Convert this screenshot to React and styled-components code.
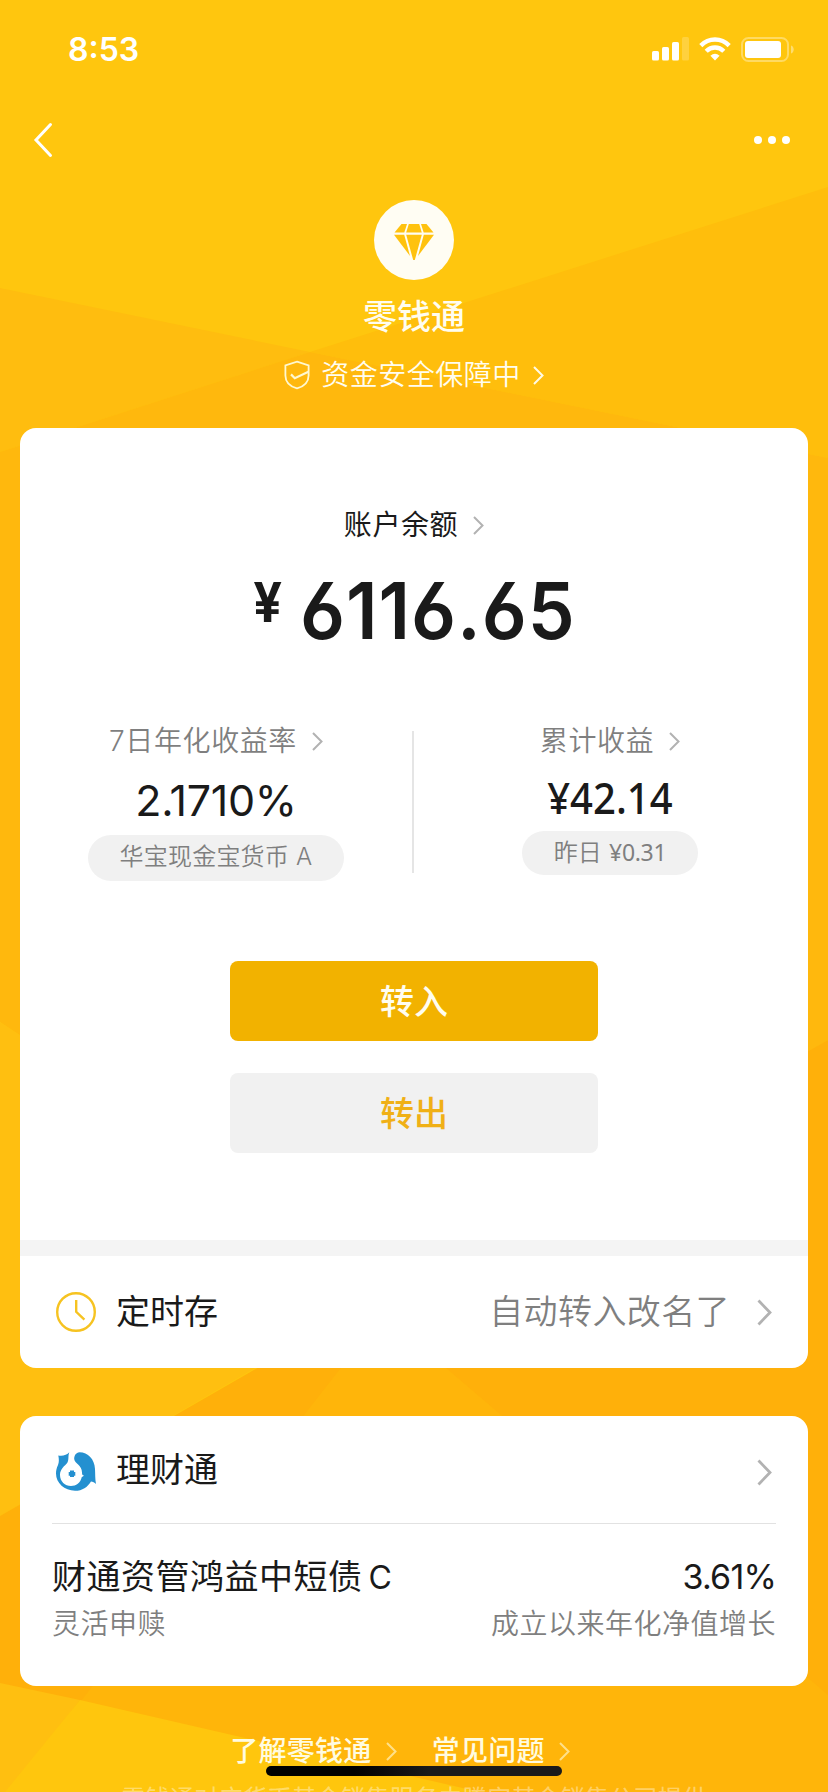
import React from 'react';
import styled, { createGlobalStyle } from 'styled-components';

const GlobalStyle = createGlobalStyle`
  * {
    box-sizing: border-box;
  }
  body {
    margin: 0;
    font-family: Inter, "Noto Sans CJK SC", sans-serif;
    color: #1a1a1a;
  }
`;

//page, the backdrop and the content share one grid cell
const Page = styled.div`
  display: grid;
  width: 828px;
  height: 1792px;
  overflow: hidden;
  position: relative;
  background-color: #ffc60e;
`;

const Backdrop = styled.svg`
  grid-area: 1 / 1;
`;

const Content = styled.div`
  grid-area: 1 / 1;
  display: flex;
  flex-direction: column;
  height: 1792px;
  padding: 0 20px;
  z-index: 1;
`;

//top bars
const StatusBar = styled.div`
  display: flex;
  flex-shrink: 0;
  align-items: center;
  justify-content: space-between;
  height: 98px;
  padding: 0 14px 0 48px;
`;

const Time = styled.span`
  font-size: 32px;
  font-weight: 600;
  letter-spacing: 0;
  color: #fff;
`;

const StatusIcons = styled.div`
  display: flex;
  align-items: center;
  gap: 10px;
`;

const NavBar = styled.div`
  display: flex;
  flex-shrink: 0;
  align-items: center;
  justify-content: space-between;
  height: 84px;
  padding: 0 18px 0 13px;
`;

//account header
const AccountHeader = styled.div`
  display: flex;
  flex-direction: column;
  flex-shrink: 0;
  align-items: center;
  height: 246px;
  padding-top: 18px;
  color: #fffdf0;
`;

const Badge = styled.div`
  display: flex;
  align-items: center;
  justify-content: center;
  width: 80px;
  height: 80px;
  padding-top: 4px;
  border-radius: 50%;
  background-color: #fffdf3;
`;

const AccountName = styled.h1`
  margin: 17px 0 0;
  font-size: 34px;
  font-weight: 500;
  line-height: 40px;
`;

const Guarantee = styled.div`
  display: flex;
  align-items: center;
  margin-top: 20px;
  height: 36px;
`;

const GuaranteeText = styled.span`
  margin: 0 12px 0 11px;
  font-size: 28px;
  font-weight: 350;
  letter-spacing: 0.5px;
  line-height: 36px;
`;

//cards
const Card = styled.section`
  display: flex;
  flex-direction: column;
  flex-shrink: 0;
  height: ${(props) => props.$height}px;
  margin-bottom: 48px;
  border-radius: 16px;
  background-color: #fff;
  overflow: hidden;
`;

const Balance = styled.div`
  display: flex;
  flex-direction: column;
  align-items: center;
  padding-top: 79px;
  height: 294px;
`;

const Label = styled.div`
  display: flex;
  align-items: center;
  gap: 15px;
  height: 36px;
  font-size: 28px;
  font-weight: ${(props) => (props.$muted ? 350 : 400)};
  letter-spacing: 0.6px;
  line-height: 36px;
  color: ${(props) => (props.$muted ? '#7f7f7f' : '#1a1a1a')};
`;

const Amount = styled.div`
  display: flex;
  align-items: flex-start;
  margin-top: 20px;
  font-weight: 600;
`;

const Yen = styled.span`
  margin: 3px 8px 0 0;
  font-size: 55px;
  font-weight: 700;
  line-height: 72px;
  transform: scaleX(0.92);
`;

const AmountValue = styled.span`
  margin-right: -8px;
  font-size: 79px;
  letter-spacing: 1px;
  line-height: 94px;
  font-feature-settings: "ss01", "cv03";
  transform: scaleX(0.945);
`;

const Stats = styled.div`
  display: flex;
  height: 239px;
`;

const Stat = styled.div`
  display: flex;
  flex-direction: column;
  align-items: center;
  width: 392px;
  padding-top: 1px;
`;

const StatDivider = styled.div`
  width: 2px;
  height: 142px;
  margin-top: 9px;
  background-color: #e5e5e5;
`;

const Rate = styled.span`
  margin: 14px 0 8px;
  font-size: 43px;
  line-height: 54px;
  letter-spacing: -0.3px;
`;

const Earned = styled.span`
  margin: 12px 0 8px;
  font-family: "Noto Sans", sans-serif;
  font-size: 44px;
  font-weight: 500;
  line-height: 52px;
  transform: scaleX(0.91);
`;

const Pill = styled.div`
  display: flex;
  align-items: baseline;
  justify-content: center;
  gap: 7px;
  width: ${(props) => props.$width}px;
  height: ${(props) => props.$height}px;
  border-radius: 23px;
  background-color: #f1f1f1;
  font-size: 24px;
  font-weight: 350;
  letter-spacing: 0.2px;
  line-height: ${(props) => props.$height - 2}px;
  color: #7f7f7f;
`;

const PillAmount = styled.span`
  font-family: "Noto Sans", sans-serif;
  font-size: 23px;
  font-weight: 400;
  letter-spacing: -0.3px;
`;

const Actions = styled.div`
  display: flex;
  flex-direction: column;
  align-items: center;
  gap: 32px;
  height: 279px;
`;

const ActionButton = styled.button`
  width: 368px;
  height: 80px;
  padding: 0 0 3px;
  border: 0;
  border-radius: 8px;
  font-family: inherit;
  font-size: 34px;
  font-weight: 500;
  color: ${(props) => (props.$primary ? '#fffdf0' : '#f0b016')};
  background-color: ${(props) => (props.$primary ? '#f2b200' : '#f1f1f1')};
`;

const Band = styled.div`
  height: 16px;
  background-color: #f4f4f4;
`;

const Row = styled.div`
  display: flex;
  align-items: center;
  height: 112px;
  padding: 0 36px;
`;

const RowTitle = styled.span`
  margin-left: 20px;
  padding-bottom: ${(props) => (props.$raised ? 4 : 0)}px;
  font-size: 34px;
  line-height: 44px;
`;

const RowValue = styled.span`
  margin: 0 27px 0 auto;
  font-size: 34px;
  font-weight: 350;
  letter-spacing: 0.4px;
  line-height: 44px;
  color: #7f7f7f;
`;

const Spacer = styled.div`
  flex: 1;
`;

const Fund = styled.div`
  margin: -5px 32px 0;
  padding-top: 30px;
  border-top: 1px solid #e2e2e2;
`;

const FundLine = styled.div`
  display: flex;
  justify-content: space-between;
  height: 46px;
  font-size: 34px;
  letter-spacing: 0.5px;
  line-height: 46px;
`;

const ShareClass = styled.span`
  margin-left: 6px;
  font-size: 32px;
`;

const FundRate = styled.span`
  letter-spacing: -0.8px;
`;

const FundNote = styled(FundLine)`
  margin-top: 1px;
  font-size: 28px;
  font-weight: 350;
  letter-spacing: 0.5px;
  color: #7f7f7f;
`;

//footer
const Links = styled.div`
  display: flex;
  flex-shrink: 0;
  justify-content: center;
  gap: 35px;
  height: 36px;
  margin-top: -1px;
  padding-right: 28px;
`;

const Link = styled.a`
  display: flex;
  align-items: center;
  gap: 14px;
  font-size: 28px;
  font-weight: 500;
  letter-spacing: 0.3px;
  line-height: 36px;
  color: #fffbe0;
`;

const Notice = styled.p`
  flex-shrink: 0;
  margin: 12px 0 0;
  font-size: 24px;
  letter-spacing: 0.4px;
  line-height: 36px;
  text-align: center;
  white-space: nowrap;
  color: rgba(255, 255, 255, 0.4);
`;

const HomeIndicator = styled.div`
  position: absolute;
  left: 266px;
  bottom: 16px;
  z-index: 2;
  width: 296px;
  height: 10px;
  border-radius: 5px;
  background: linear-gradient(to right, #000 30%, #1a1a1a 55%);
`;

const Chevron = ({ color = '#b2b2b2', large }) => (
  <svg width={large ? 15 : 11} height={large ? 27 : 19} viewBox={large ? '0 0 15 27' : '0 0 11 19'} fill="none" stroke={color}>
    {large ? (
      <path d="M1.5 1.5L13 13.5L1.5 25.5" strokeWidth="2.8" />
    ) : (
      <path d="M1 1L9.5 9.5L1 18" strokeWidth="2" />
    )}
  </svg>
);

const SignalIcon = () => (
  <svg width="37" height="24" viewBox="0 0 37 24" fill="#fff">
    <rect x="0" y="14" width="7" height="9.5" rx="1.6" />
    <rect x="10" y="10" width="7" height="13.5" rx="1.6" />
    <rect x="20" y="5" width="7" height="18.5" rx="1.6" />
    <rect x="30" y="0" width="7" height="23.5" rx="1.6" opacity="0.2" />
  </svg>
);

const WifiIcon = () => (
  <svg width="32" height="24" viewBox="0 0 32 24" fill="none" stroke="#fff" strokeWidth="4.4">
    <path d="M1.8 8.6C9.8 0.4 22.2 0.4 30.2 8.6" />
    <path d="M7.2 14.2C12.2 9.2 19.8 9.2 24.8 14.2" />
    <path d="M11.4 18.8Q16 14.8 20.6 18.8L16 23.6Z" fill="#fff" stroke="none" />
  </svg>
);

const BatteryIcon = () => (
  <svg width="53" height="25" viewBox="0 0 53 25">
    <rect x="1" y="1" width="46" height="23" rx="6.5" fill="none" stroke="#fff" strokeWidth="2" opacity="0.35" />
    <rect x="4" y="4" width="36" height="17" rx="3" fill="#fff" />
    <path d="M50 8.5C53.6 9.5 53.6 15.5 50 16.5Z" fill="#fff" opacity="0.4" />
  </svg>
);

const DiamondIcon = () => (
  <svg width="40" height="38" viewBox="0 0 40 38" fill="#ffc20e">
    <path d="M7.5 1H13L10.3 9.6H0.5Z" />
    <path d="M14.8 1H25.2L27.8 9.6H12.2Z" />
    <path d="M27 1H32.5L39.5 9.6H29.7Z" />
    <path d="M0 11.8H10.2L16 33Z" />
    <path d="M12.2 11.8H27.8L20.8 37H19.2Z" />
    <path d="M29.8 11.8H40L24 33Z" />
  </svg>
);

const ShieldIcon = () => (
  <svg width="26" height="30" viewBox="0 0 26 30" fill="none" stroke="#fff8d0" strokeWidth="1.8">
    <path d="M13 1.6L24.6 5.4V15.5C24.6 21.5 20.2 26.4 13 28.4C5.8 26.4 1.4 21.5 1.4 15.5V5.4Z" />
    <path d="M7 14.4L10.8 18.2L24.4 11.8" strokeWidth="2.2" />
  </svg>
);

const ClockIcon = () => (
  <svg width="40" height="40" viewBox="0 0 40 40" fill="none" stroke="#f6c321" strokeWidth="2.4">
    <circle cx="20" cy="20" r="18.8" />
    <path d="M20.2 8V19.8L28.4 27.6" />
  </svg>
);

const FishIcon = () => (
  <svg width="40" height="40" viewBox="0 0 40 40" fill="#2490d0">
    <path d="M13.3 0.3C11 3.2 6 4.6 2.3 3.5C3 7 3.2 10 2 13C0.5 16 0 19 0 21.5C0 31 8.5 38.7 19 38.7C26.5 38.7 31.5 35 35 29.4C36.8 29.4 38.6 30.4 40 32C39 27 39.3 22 39 17C38.5 7 32 0.5 23.5 0.3C20 0.5 17.8 4 18.3 7.5C19 11.4 26 13.5 26 20.5C26 22.4 26.4 23.3 28 23.6C27.4 24.6 26.4 24.6 25.8 25C24.5 31 20 34 15 34C9 34 4 29.4 4 23C4 17 9 13.6 11.2 11C13.2 8.2 11.8 4 13.3 0.3Z" />
    <path d="M14 18.6H18V19.9H19.3V23.7H18V25H14V23.7H12.7V19.9H14Z" />
  </svg>
);

const BackdropShapes = () => (
  <Backdrop width="828" height="1792" viewBox="0 0 828 1792">
    <path d="M0 288L310 352L0 452Z" fill="#ffbd0f" />
    <path d="M828 187L310 352L828 458Z" fill="#ffbe0c" />
    <path d="M310 352L828 458V1040L414 1300L0 1022V452Z" fill="#ffb80d" />
    <path d="M0 1022L400 1284L0 1516Z" fill="#ffbf10" />
    <path d="M828 1040L0 1516V1792H828Z" fill="#ffb00a" />
    <path d="M383 1314L10 1792H828V1695Z" fill="#ffb50a" />
    <path d="M0 1683L80 1700L10 1792H0Z" fill="#ffbf10" />
    <path d="M80 1700L480 1792H5Z" fill="#ffc60d" />
  </Backdrop>
);

function App() {
  return (
    <Page>
      <GlobalStyle />
      <BackdropShapes />
      <Content>
        <StatusBar>
          <Time>8:53</Time>
          <StatusIcons>
            <SignalIcon />
            <WifiIcon />
            <BatteryIcon />
          </StatusIcons>
        </StatusBar>
        <NavBar>
          <svg width="20" height="36" viewBox="0 0 20 36" fill="none" stroke="#fff" strokeWidth="3" strokeLinecap="round">
            <path d="M17.5 2.5L3 18L17.5 33.5" />
          </svg>
          <svg width="36" height="8" viewBox="0 0 36 8" fill="#fff">
            <circle cx="4" cy="4" r="4" />
            <circle cx="18" cy="4" r="4" />
            <circle cx="32" cy="4" r="4" />
          </svg>
        </NavBar>

        <AccountHeader>
          <Badge>
            <DiamondIcon />
          </Badge>
          <AccountName>零钱通</AccountName>
          <Guarantee>
            <ShieldIcon />
            <GuaranteeText>资金安全保障中</GuaranteeText>
            <Chevron color="#fffbe6" />
          </Guarantee>
        </AccountHeader>

        <Card $height={940}>
          <Balance>
            <Label>
              账户余额
              <Chevron />
            </Label>
            <Amount>
              <Yen>¥</Yen>
              <AmountValue>6116.65</AmountValue>
            </Amount>
          </Balance>
          <Stats>
            <Stat>
              <Label $muted>
                7日年化收益率
                <Chevron />
              </Label>
              <Rate>2.1710%</Rate>
              <Pill $width={256} $height={46}>
                <span>华宝现金宝货币</span>
                <span>A</span>
              </Pill>
            </Stat>
            <StatDivider />
            <Stat>
              <Label $muted>
                累计收益
                <Chevron />
              </Label>
              <Earned>¥42.14</Earned>
              <Pill $width={176} $height={44}>
                <span>昨日</span>
                <PillAmount>¥0.31</PillAmount>
              </Pill>
            </Stat>
          </Stats>
          <Actions>
            <ActionButton $primary>转入</ActionButton>
            <ActionButton>转出</ActionButton>
          </Actions>
          <Band />
          <Row>
            <ClockIcon />
            <RowTitle>定时存</RowTitle>
            <RowValue>自动转入改名了</RowValue>
            <Chevron large />
          </Row>
        </Card>

        <Card $height={270}>
          <Row>
            <FishIcon />
            <RowTitle $raised>理财通</RowTitle>
            <Spacer />
            <Chevron large />
          </Row>
          <Fund>
            <FundLine>
              <span>
                财通资管鸿益中短债<ShareClass>C</ShareClass>
              </span>
              <FundRate>3.61%</FundRate>
            </FundLine>
            <FundNote>
              <span>灵活申赎</span>
              <span>成立以来年化净值增长</span>
            </FundNote>
          </Fund>
        </Card>

        <Links>
          <Link>
            了解零钱通
            <Chevron color="#ffe08a" />
          </Link>
          <Link>
            常见问题
            <Chevron color="#ffe08a" />
          </Link>
        </Links>
        <Notice>零钱通对应货币基金销售服务由腾安基金销售公司提供</Notice>
      </Content>
      <HomeIndicator />
    </Page>
  );
}

export default App;
